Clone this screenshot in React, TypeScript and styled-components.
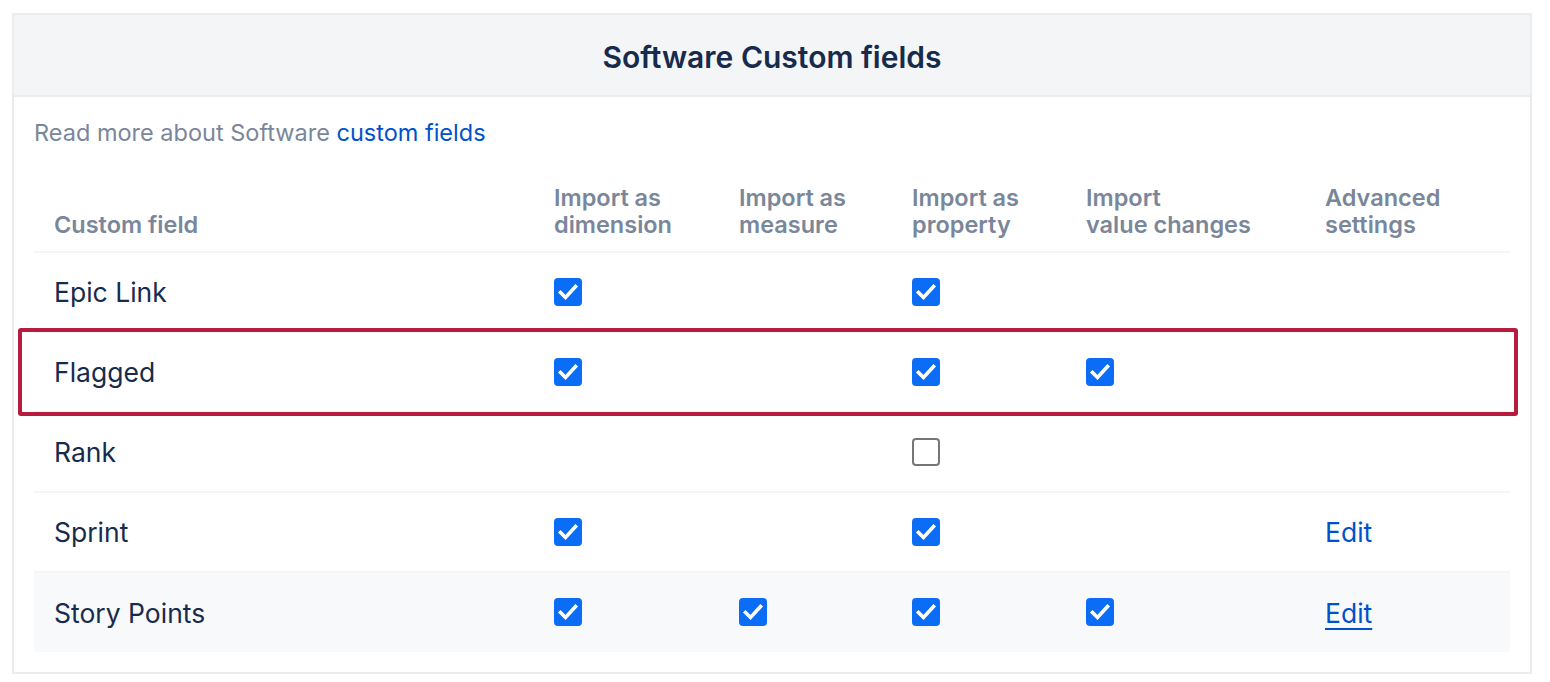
import React from 'react';
import styled, { createGlobalStyle } from 'styled-components';

const GlobalStyle = createGlobalStyle`
  html, body {
    margin: 0;
    padding: 0;
    background: #ffffff;
    font-family: Inter, "Noto Sans", sans-serif;
    -webkit-font-smoothing: antialiased;
  }
`;

const Page = styled.div`
  padding: 13px 18px 9px 12px;
`;

const Panel = styled.section`
  border: 2px solid #ebecf0;
`;

const PanelHeader = styled.header`
  height: 80px;
  background: #f4f5f7;
  border-bottom: 2px solid #ebecf0;
  display: flex;
  align-items: center;
  justify-content: center;
`;

const Title = styled.h2`
  margin: 0;
  padding-top: 3px;
  font-size: 30px;
  font-weight: 600;
  color: #172b4d;
`;

const PanelBody = styled.div`
  padding: 21px 20px 20px 20px;
`;

const Intro = styled.p`
  margin: 0;
  font-size: 23.5px;
  line-height: 30px;
  color: #7a869a;
`;

const Link = styled.a<{ $underline?: boolean }>`
  color: #0052cc;
  text-decoration: ${(p) => (p.$underline ? 'underline' : 'none')};
  text-underline-offset: 5px;
  text-decoration-thickness: 2px;
  cursor: pointer;
`;

const Table = styled.table`
  width: 100%;
  margin-top: 22px;
  border-collapse: collapse;
  table-layout: fixed;
`;

const Th = styled.th<{ $w: number }>`
  box-sizing: border-box;
  width: ${(p) => p.$w}px;
  text-align: left;
  vertical-align: bottom;
  padding: 14px 20px 13px 20px;
  font-size: 23.5px;
  line-height: 27px;
  font-weight: 600;
  color: #7a869a;
  white-space: nowrap;
  border-bottom: 2px solid #f4f5f7;
`;

const Row = styled.tr<{ $shaded?: boolean }>`
  height: 80px;
  background: ${(p) => (p.$shaded ? '#f8f9fb' : 'transparent')};
  border-bottom: 2px solid #f4f5f7;
  &:last-child {
    border-bottom: none;
  }
`;

const Td = styled.td`
  position: relative;
  padding: 0 20px;
  vertical-align: middle;
  font-size: 26.5px;
  color: #172b4d;
`;

const Highlight = styled.div`
  position: absolute;
  left: -16px;
  top: -5px;
  box-sizing: border-box;
  width: 1500px;
  height: 88px;
  border: 4px solid #b51c3f;
  border-radius: 3px;
  pointer-events: none;
`;

const Box = styled.span<{ $checked: boolean }>`
  display: inline-flex;
  align-items: center;
  justify-content: center;
  box-sizing: border-box;
  width: 28px;
  height: 28px;
  border-radius: 4px;
  margin-top: -6px;
  vertical-align: middle;
  background: ${(p) => (p.$checked ? '#0b6cf6' : '#ffffff')};
  border: ${(p) => (p.$checked ? 'none' : '2px solid #767676')};
`;

const Check = ({ on }: { on: boolean }) => (
  <Box $checked={on}>
    {on && (
      <svg width="28" height="28" viewBox="0 0 28 28">
        <path
          d="M6.5 14.5l5 5L21.5 8.5"
          fill="none"
          stroke="#ffffff"
          strokeWidth="3.6"
          strokeLinecap="square"
          strokeLinejoin="miter"
        />
      </svg>
    )}
  </Box>
);

type Field = {
  name: string;
  dim: boolean;
  measure: boolean;
  prop: boolean | 'empty';
  changes: boolean;
  edit?: 'plain' | 'hover';
  flagged?: boolean;
  shaded?: boolean;
};

const fields: Field[] = [
  { name: 'Epic Link', dim: true, measure: false, prop: true, changes: false },
  { name: 'Flagged', dim: true, measure: false, prop: true, changes: true, flagged: true },
  { name: 'Rank', dim: false, measure: false, prop: 'empty', changes: false },
  { name: 'Sprint', dim: true, measure: false, prop: true, changes: false, edit: 'plain' },
  { name: 'Story Points', dim: true, measure: true, prop: true, changes: true, edit: 'hover', shaded: true },
];

const headers: { w: number; lines: string[] }[] = [
  { w: 500, lines: ['Custom field'] },
  { w: 185, lines: ['Import as', 'dimension'] },
  { w: 173, lines: ['Import as', 'measure'] },
  { w: 174, lines: ['Import as', 'property'] },
  { w: 239, lines: ['Import', 'value changes'] },
  { w: 205, lines: ['Advanced', 'settings'] },
];

export default function App() {
  return (
    <>
      <GlobalStyle />
      <Page>
        <Panel>
          <PanelHeader>
            <Title>Software Custom fields</Title>
          </PanelHeader>
          <PanelBody>
            <Intro>
              Read more about Software <Link>custom fields</Link>
            </Intro>
            <Table>
              <thead>
                <tr>
                  {headers.map((h) => (
                    <Th key={h.lines.join(' ')} $w={h.w}>
                      {h.lines.map((l, i) => (
                        <React.Fragment key={l}>
                          {i > 0 && <br />}
                          {l}
                        </React.Fragment>
                      ))}
                    </Th>
                  ))}
                </tr>
              </thead>
              <tbody>
                {fields.map((f) => (
                  <Row key={f.name} $shaded={f.shaded}>
                    <Td>
                      {f.flagged && <Highlight />}
                      {f.name}
                    </Td>
                    <Td>{f.dim && <Check on />}</Td>
                    <Td>{f.measure && <Check on />}</Td>
                    <Td>{f.prop && <Check on={f.prop === true} />}</Td>
                    <Td>{f.changes && <Check on />}</Td>
                    <Td>
                      {f.edit && <Link $underline={f.edit === 'hover'}>Edit</Link>}
                    </Td>
                  </Row>
                ))}
              </tbody>
            </Table>
          </PanelBody>
        </Panel>
      </Page>
    </>
  );
}
